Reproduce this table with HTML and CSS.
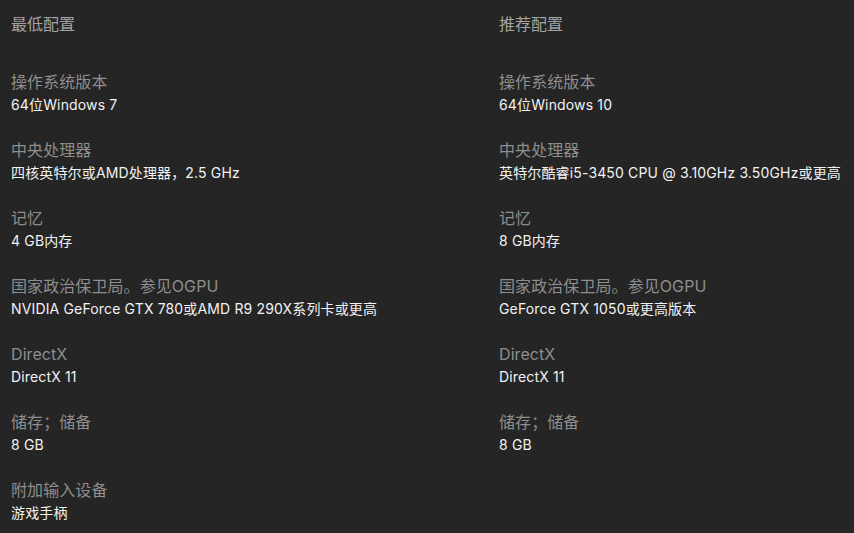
FILE: index.html
```html
<!DOCTYPE html>
<html lang="zh-CN">
<head>
<meta charset="utf-8">
<link rel="stylesheet" href="styles.css">
</head>
<body>
<div class="specs">
  <section class="col">
    <h2 class="title">最低配置</h2>
    <dl class="list">
      <div class="item"><dt>操作系统版本</dt><dd>64位Windows 7</dd></div>
      <div class="item"><dt>中央处理器</dt><dd>四核英特尔或AMD处理器，2.5 GHz</dd></div>
      <div class="item"><dt>记忆</dt><dd>4 GB内存</dd></div>
      <div class="item"><dt>国家政治保卫局。参见OGPU</dt><dd>NVIDIA GeForce GTX 780或AMD R9 290X系列卡或更高</dd></div>
      <div class="item"><dt>DirectX</dt><dd>DirectX 11</dd></div>
      <div class="item"><dt>储存；储备</dt><dd>8 GB</dd></div>
      <div class="item"><dt>附加输入设备</dt><dd>游戏手柄</dd></div>
    </dl>
  </section>
  <section class="col">
    <h2 class="title">推荐配置</h2>
    <dl class="list">
      <div class="item"><dt>操作系统版本</dt><dd>64位Windows 10</dd></div>
      <div class="item"><dt>中央处理器</dt><dd>英特尔酷睿i5-3450 CPU @ 3.10GHz 3.50GHz或更高</dd></div>
      <div class="item"><dt>记忆</dt><dd>8 GB内存</dd></div>
      <div class="item"><dt>国家政治保卫局。参见OGPU</dt><dd>GeForce GTX 1050或更高版本</dd></div>
      <div class="item"><dt>DirectX</dt><dd>DirectX 11</dd></div>
      <div class="item"><dt>储存；储备</dt><dd>8 GB</dd></div>
    </dl>
  </section>
</div>
</body>
</html>
```
FILE: styles.css
```css
html, body {
  margin: 0;
  padding: 0;
  background: #252525;
}
body {
  font-family: "Inter", "Noto Sans CJK SC", sans-serif;
  width: 854px;
  height: 533px;
  overflow: hidden;
}
.specs {
  display: grid;
  grid-template-columns: 488px 1fr;
  padding: 13px 0 0 11px;
}
.title {
  margin: 0 0 36px;
  font-size: 16px;
  font-weight: 400;
  line-height: 22px;
  color: #a3a3a3;
}
.list {
  margin: 0;
  display: flex;
  flex-direction: column;
  gap: 23px;
}
.item dt {
  font-size: 16px;
  line-height: 23px;
  letter-spacing: 0.08px;
  color: #8e8e8e;
}
.item dd {
  margin: 0;
  font-size: 14px;
  line-height: 22px;
  letter-spacing: 0.15px;
  color: #f2f2f2;
}
```
